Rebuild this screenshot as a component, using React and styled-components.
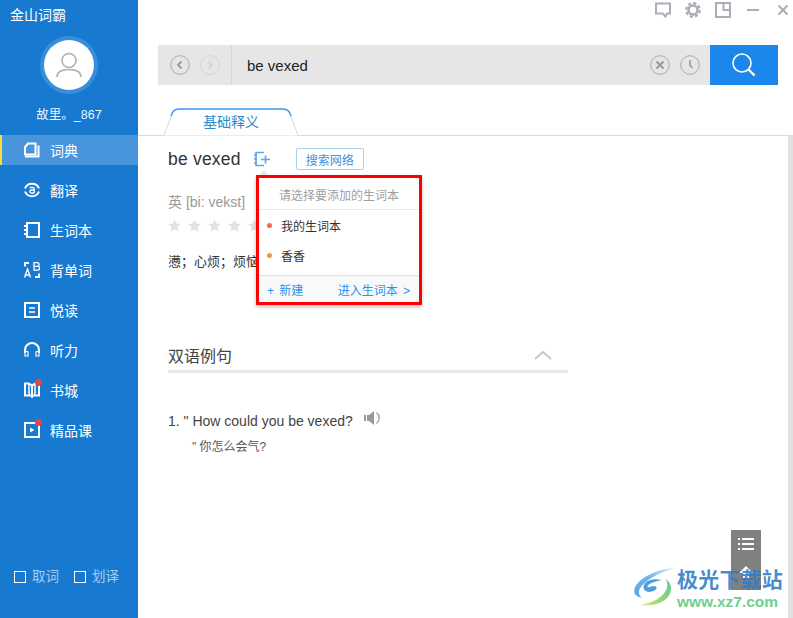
import styled, { createGlobalStyle } from "styled-components";

const GlobalStyle = createGlobalStyle`
  html, body {
    margin: 0;
    padding: 0;
    background: #fff;
  }
  body {
    font-family: "Liberation Sans", "Noto Sans CJK SC", sans-serif;
  }
  * {
    box-sizing: border-box;
  }
`;

const Window = styled.div`
  position: relative;
  display: flex;
  width: 793px;
  height: 618px;
  overflow: hidden;
`;

// Sidebar
const Sidebar = styled.aside`
  display: flex;
  flex-direction: column;
  width: 138px;
  flex-shrink: 0;
  background: #1879d0;
  color: #fff;
`;
const AppTitle = styled.div`
  height: 36px;
  padding: 6px 0 0 10px;
  font-size: 14px;
  line-height: 18px;
`;
const Avatar = styled.div`
  display: flex;
  align-items: center;
  justify-content: center;
  align-self: center;
  width: 50px;
  height: 50px;
  border-radius: 50%;
  background: #fff;
  box-shadow: 0 0 0 4px #3a8ddb;
  margin-top: 4px;
`;
const UserName = styled.div`
  height: 18px;
  margin-top: 16px;
  text-align: center;
  font-size: 12.5px;
  line-height: 18px;
  color: #eaf4fc;
`;
const Nav = styled.nav`
  display: flex;
  flex-direction: column;
  gap: 10px;
  margin-top: 11px;
`;
const NavItem = styled.div`
  display: flex;
  align-items: center;
  gap: 10px;
  height: 30px;
  padding-left: ${(p) => (p.$active ? "22px" : "24px")};
  border-left: ${(p) => (p.$active ? "2px solid #f7e03c" : "none")};
  background: ${(p) => (p.$active ? "#4895dc" : "transparent")};
  font-size: 14px;
`;
const NavIcon = styled.span`
  position: relative;
  display: flex;
  width: 16px;
  height: 16px;
`;
const RedDot = styled.i`
  position: absolute;
  top: -3px;
  right: -2px;
  width: 7px;
  height: 7px;
  border-radius: 50%;
  background: #e64545;
`;
const SidebarFooter = styled.div`
  display: flex;
  gap: 15px;
  margin-top: auto;
  margin-bottom: 33px;
  padding-left: 14px;
`;
const CheckOption = styled.label`
  display: flex;
  align-items: center;
  gap: 6px;
  font-size: 13.5px;
  line-height: 16px;
  color: #a4cdef;
`;
const CheckBox = styled.span`
  width: 12px;
  height: 12px;
  border: 1px solid #fff;
`;

// Main column
const Main = styled.main`
  position: relative;
  flex: 1;
  display: flex;
  flex-direction: column;
  min-width: 0;
`;
const TitleBar = styled.div`
  display: flex;
  justify-content: flex-end;
  align-items: center;
  gap: 14px;
  height: 20px;
  padding-right: 5px;
`;
const WindowButtons = styled.div`
  display: flex;
  align-items: center;
  gap: 19px;
  margin-left: 2px;
`;
const SearchRow = styled.div`
  display: flex;
  height: 40px;
  margin: 25px 15px 0 20px;
  background: #e6e6e6;
`;
const NavArrows = styled.div`
  display: flex;
  align-items: center;
  gap: 10px;
  width: 74px;
  padding-left: 12px;
  border-right: 1px solid #d8d8d8;
`;
const SearchText = styled.div`
  flex: 1;
  padding-left: 15px;
  font-size: 15px;
  line-height: 41px;
  color: #222;
`;
const SearchActions = styled.div`
  display: flex;
  align-items: center;
  gap: 10px;
  padding-right: 10px;
`;
const SearchButton = styled.div`
  display: flex;
  align-items: center;
  justify-content: center;
  width: 68px;
  background: #1c87ea;
`;
const TabBar = styled.div`
  display: flex;
  height: 28px;
  margin: 23px 5px 0 0;
  padding-left: 25px;
  border-bottom: 1px solid #d9d9d9;
`;
const TabLabel = styled.div`
  position: relative;
  width: 136px;
  height: 28px;
  text-align: center;
  font-size: 14px;
  line-height: 28px;
  color: #2a8bd0;
`;
const TabShape = styled.svg`
  position: absolute;
  left: 0;
  top: 0;
`;
const TabText = styled.span`
  position: relative;
`;
const Content = styled.section`
  width: 400px;
  margin-left: 30px;
`;
const WordRow = styled.div`
  display: flex;
  align-items: center;
  height: 22px;
  margin-top: 12px;
`;
const Word = styled.h1`
  margin: 0 13px 0 0;
  font-size: 17.5px;
  font-weight: 400;
  color: #333;
  letter-spacing: 0.2px;
`;
const WebSearch = styled.button`
  width: 68px;
  height: 22px;
  margin-left: 26px;
  padding: 0;
  border: 1px solid #a5d2ea;
  border-radius: 2px;
  background: #fff;
  font-family: inherit;
  font-size: 12px;
  color: #3a93dc;
`;
const Phonetic = styled.div`
  margin-top: 23px;
  font-size: 14px;
  line-height: 18px;
  color: #999;
`;
const Stars = styled.div`
  display: flex;
  gap: 7px;
  margin-top: 8px;
`;
const Meaning = styled.div`
  margin-top: 21px;
  font-size: 13px;
  line-height: 18px;
  color: #333;
`;
const SectionHead = styled.div`
  display: flex;
  align-items: center;
  justify-content: space-between;
  height: 38px;
  margin-top: 64px;
  padding: 4px 16px 0 0;
  border-bottom: 3px solid #e6e9ec;
  font-size: 16px;
  color: #444;
`;
const ExampleLine = styled.div`
  display: flex;
  align-items: center;
  gap: 11px;
  margin-top: 38px;
  font-size: 14px;
  line-height: 20px;
  color: #444;
`;
const SpeakerIcon = styled.svg`
  margin-bottom: 6px;
`;
const ExampleCn = styled.div`
  margin: 7px 0 0 24px;
  font-size: 12px;
  line-height: 18px;
  color: #555;
`;
const ScrollTrack = styled.div`
  position: absolute;
  top: 135px;
  right: 0;
  bottom: 0;
  width: 5px;
  background: #e0e0e0;
`;

// Notebook picker
const Picker = styled.div`
  position: absolute;
  left: 118px;
  top: 175px;
  width: 166px;
  height: 130px;
  border: 3px solid #f00;
  background: #fff;
  box-shadow: 0 2px 4px rgba(0, 0, 0, 0.25);
`;
const PickerNotch = styled.i`
  position: absolute;
  left: 1px;
  top: -8px;
  border: 4px solid transparent;
  border-top: 0;
  border-bottom: 5px solid #e4e4e4;
`;
const PickerTitle = styled.div`
  height: 32px;
  padding-left: 20px;
  border-bottom: 1px solid #e8e8e8;
  font-size: 12px;
  line-height: 36px;
  color: #a0a0a0;
`;
const PickerList = styled.div`
  height: 65px;
`;
const PickerItem = styled.div`
  display: flex;
  align-items: center;
  gap: 9px;
  height: 30px;
  padding-left: 8px;
  font-size: 12px;
  color: #333;
`;
const ItemDot = styled.i`
  width: 5px;
  height: 5px;
  border-radius: 50%;
  background: ${(p) => p.$color};
`;
const PickerFooter = styled.div`
  display: flex;
  justify-content: space-between;
  height: 27px;
  padding: 0 9px 0 8px;
  border-top: 1px solid #e2e2e2;
  background: #f8f9fa;
  font-size: 12px;
  line-height: 30px;
  word-spacing: 2px;
  color: #2b94ea;
`;

// Floating tools and site badge
const FloatTools = styled.div`
  position: absolute;
  left: 593px;
  top: 530px;
  display: flex;
  flex-direction: column;
  align-items: center;
  gap: 16px;
  width: 30px;
  height: 60px;
  padding-top: 8px;
  background: #808080;
`;
const Badge = styled.div`
  position: absolute;
  left: 495px;
  top: 566px;
  display: flex;
`;
const BadgeText = styled.div`
  display: flex;
  flex-direction: column;
  padding-top: 1px;
`;
const BadgeName = styled.div`
  font-size: 21px;
  line-height: 25px;
  font-weight: 700;
  letter-spacing: 0.2px;
  color: rgba(45, 125, 200, 0.88);
`;
const BadgeUrl = styled.div`
  font-size: 15.5px;
  line-height: 20px;
  font-weight: 700;
  color: #6fcf8f;
`;

function Glyph({ size = 16, color = "#fff", width = 2, children, viewBox = "0 0 16 16" }) {
  return (
    <svg width={size} height={size} viewBox={viewBox} fill="none" stroke={color} strokeWidth={width}>
      {children}
    </svg>
  );
}

const navItems = [
  {
    label: "词典",
    active: true,
    icon: (
      <>
        <path d="M4 1.500h7.500v11H1V5z" />
        <path d="M14.500 3.500v11H1" />
      </>
    ),
  },
  {
    label: "翻译",
    icon: (
      <>
        <path d="M1 6.500A7.500 7.500 0 0 1 15 6.500" />
        <path d="M15 9.500A7.500 7.500 0 0 1 1 9.500" />
        <path d="M5.700 5.500h3.300a1.300 1.300 0 0 1 1.300 1.300v4M10.300 8H7.300a1.500 1.500 0 0 0 0 3h3" strokeWidth="1.300" />
      </>
    ),
  },
  {
    label: "生词本",
    icon: (
      <>
        <path d="M3 1h12v14H3z" />
        <path d="M0 4h4M0 8h4M0 12h4" />
      </>
    ),
  },
  {
    label: "背单词",
    icon: (
      <>
        <path d="M5 1H1v3.500M11 15h4v-3.500" />
        <path d="M.5 15.500 3.500 7l3 8.500M1.500 13h4" strokeWidth="1.400" />
        <path d="M10 .7h3.300a1.800 1.800 0 0 1 0 3.600H10zM10 4.300h3.800a1.900 1.900 0 0 1 0 3.800H10z" strokeWidth="1.300" />
      </>
    ),
  },
  {
    label: "悦读",
    icon: (
      <>
        <path d="M1 1h14v14H1z" />
        <path d="M5 6h6M5 10h6" strokeWidth="1.500" />
      </>
    ),
  },
  {
    label: "听力",
    icon: (
      <>
        <path d="M1 11V8a7 7 0 0 1 14 0v3" />
        <path d="M1 9v5h3v-4zM15 9v5h-3v-4z" strokeWidth="1.200" />
      </>
    ),
  },
  {
    label: "书城",
    dot: true,
    icon: (
      <>
        <path d="M5 1.500H1V13.500h14V1.500h-4" />
        <path d="M5 1.500 8 3.500l3-2M8 3.500V16" />
        <path d="M5 1.500v12M11 1.500v12" strokeWidth="1.500" />
      </>
    ),
  },
  {
    label: "精品课",
    dot: true,
    icon: (
      <>
        <path d="M1 1h14v14H1z" />
        <path d="M6 5.500v5l4.500-2.500z" fill="#fff" stroke="none" />
      </>
    ),
  },
];

function Star() {
  return (
    <svg width="13" height="13" viewBox="0 0 15 14">
      <path d="m7.500 0 2.200 4.700 5.300.6-3.900 3.500 1 5.200-4.600-2.600L2.900 14l1-5.200L0 5.300l5.300-.6z" fill="#dfe3e8" />
    </svg>
  );
}

function RoundIcon({ color = "#aaa", children }) {
  return (
    <svg width="20" height="20" viewBox="0 0 20 20" fill="none" stroke={color}>
      <circle cx="10" cy="10" r="9.300" />
      {children}
    </svg>
  );
}

function App() {
  return (
    <Window>
      <GlobalStyle />
      <Sidebar>
        <AppTitle>金山词霸</AppTitle>
        <Avatar>
          <Glyph size={26} color="#b0b0b0" width={1.600} viewBox="0 0 26 26">
            <circle cx="13" cy="8.500" r="7" />
            <path d="M1 25c0-5 5-7.500 12-7.500S25 20 25 25" />
          </Glyph>
        </Avatar>
        <UserName>故里。_867</UserName>
        <Nav>
          {navItems.map((item) => (
            <NavItem key={item.label} $active={item.active}>
              <NavIcon>
                <Glyph>{item.icon}</Glyph>
                {item.dot && <RedDot />}
              </NavIcon>
              {item.label}
            </NavItem>
          ))}
        </Nav>
        <SidebarFooter>
          <CheckOption>
            <CheckBox />
            取词
          </CheckOption>
          <CheckOption>
            <CheckBox />
            划译
          </CheckOption>
        </SidebarFooter>
      </Sidebar>

      <Main>
        <TitleBar>
          <Glyph size={16} color="#adadb5" viewBox="0 0 16 16">
            <path d="M1 1.500h14v10h-3l-1.500 3-3-3H1z" />
          </Glyph>
          <Glyph size={16} color="#adadb5" viewBox="0 0 16 16">
            <circle cx="8" cy="8" r="4.500" strokeWidth="2.600" />
            <circle cx="8" cy="8" r="6.800" strokeWidth="2.200" strokeDasharray="3.300 2.040" />
          </Glyph>
          <Glyph size={16} color="#adadb5" viewBox="0 0 16 16">
            <path d="M1 1h14v14H1zM8.500 1v7H15" />
          </Glyph>
          <WindowButtons>
            <Glyph size={12} color="#adadb5" viewBox="0 0 12 12">
              <path d="M0 6h12" />
            </Glyph>
            <Glyph size={10} color="#adadb5" viewBox="0 0 10 10">
              <path d="m.5.5 9 9M9.500.5l-9 9" />
            </Glyph>
          </WindowButtons>
        </TitleBar>

        <SearchRow>
          <NavArrows>
            <RoundIcon>
              <path d="M11.500 6.500 8 10l3.500 3.500" stroke="#999" strokeWidth="1.800" />
            </RoundIcon>
            <RoundIcon color="#d4d4d4">
              <path d="M8.500 6.500 12 10l-3.500 3.500" stroke="#d4d4d4" strokeWidth="1.800" />
            </RoundIcon>
          </NavArrows>
          <SearchText>be vexed</SearchText>
          <SearchActions>
            <RoundIcon>
              <path d="m6.500 6.500 7 7M13.500 6.500l-7 7" stroke="#999" strokeWidth="2" />
            </RoundIcon>
            <RoundIcon>
              <path d="M10 5v5.500l2.500 2.500" stroke="#999" strokeWidth="1.600" />
            </RoundIcon>
          </SearchActions>
          <SearchButton>
            <svg width="24" height="24" viewBox="0 0 24 24" fill="none" stroke="#fff">
              <circle cx="10" cy="10" r="9" strokeWidth="1.600" />
              <path d="m16.500 16.500 6 6" strokeWidth="2.400" />
            </svg>
          </SearchButton>
        </SearchRow>

        <TabBar>
          <TabLabel>
            <TabShape width="136" height="28" viewBox="0 0 136 28" fill="#fff">
              <path d="M1 27.500 9 6Q11 1 17 1h102q6 0 8 5l8 21.500" stroke="#d9d9d9" />
              <path d="M8 8 9.500 4.500Q11 1 17 1h102q6 0 7.500 3.500L128 8" fill="none" stroke="#3e9bf2" strokeWidth="1.500" />
            </TabShape>
            <TabText>基础释义</TabText>
          </TabLabel>
        </TabBar>

        <Content>
          <WordRow>
            <Word>be vexed</Word>
            <Glyph size={16} color="#5ba7ef" width={1.700} viewBox="0 0 16 16">
              <path d="M10 1.500H2v13h8M0 4h3M0 8h3M0 12h3M7 8.500h9M11.500 4.500v8" />
            </Glyph>
            <WebSearch>搜索网络</WebSearch>
          </WordRow>
          <Phonetic>英 [bi: vekst]</Phonetic>
          <Stars>
            <Star />
            <Star />
            <Star />
            <Star />
            <Star />
          </Stars>
          <Meaning>懑；心烦；烦恼</Meaning>
          <SectionHead>
            双语例句
            <svg width="18" height="10" viewBox="0 0 18 10" fill="none" stroke="#c3c8ce" strokeWidth="2">
              <path d="m1 9 8-7 8 7" />
            </svg>
          </SectionHead>
          <ExampleLine>
            1. " How could you be vexed?
            <SpeakerIcon width="18" height="14" viewBox="0 0 18 14">
              <path d="M0 4h2v6H0zM3 4h2l5-4v14l-5-4H3z" fill="#9a9a9a" />
              <path d="M12.500 1.500a7 7 0 0 1 0 11" fill="none" stroke="#9a9a9a" strokeWidth="1.300" />
            </SpeakerIcon>
          </ExampleLine>
          <ExampleCn>" 你怎么会气?</ExampleCn>
        </Content>

        <Picker>
          <PickerNotch />
          <PickerTitle>请选择要添加的生词本</PickerTitle>
          <PickerList>
            <PickerItem>
              <ItemDot $color="#f4694a" />
              我的生词本
            </PickerItem>
            <PickerItem>
              <ItemDot $color="#f79a27" />
              香香
            </PickerItem>
          </PickerList>
          <PickerFooter>
            <span>+ 新建</span>
            <span>进入生词本 &gt;</span>
          </PickerFooter>
        </Picker>

        <ScrollTrack />

        <FloatTools>
          <svg width="16" height="12" viewBox="0 0 16 12" stroke="#fff" strokeWidth="2">
            <path d="M0 1h2M4 1h12M0 6h2M4 6h12M0 11h2M4 11h12" />
          </svg>
          <svg width="14" height="12" viewBox="0 0 14 12" fill="#fff">
            <path d="M7 0 14 7H10V12H4V7H0z" />
          </svg>
        </FloatTools>

        <Badge>
          <svg width="44" height="42" viewBox="0 0 46 44" fill="none">
            <defs>
              <linearGradient id="sweepBlue" x1="1" y1="0" x2="0" y2="1">
                <stop offset="0" stopColor="#d5e9f7" />
                <stop offset="0.5" stopColor="#6fb5ea" />
                <stop offset="1" stopColor="#5aa4e0" />
              </linearGradient>
              <linearGradient id="sweepGreen" x1="1" y1="0" x2="0" y2="1">
                <stop offset="0" stopColor="#5cc79a" />
                <stop offset="0.6" stopColor="#96d96c" />
                <stop offset="1" stopColor="#f3ea8a" />
              </linearGradient>
            </defs>
            <path d="M44 2C28 3 12 9 4 19c-5 7-3 13 5 14-4-3-4-8 1-13C17 12 30 6 44 2z" fill="url(#sweepBlue)" />
            <path d="M30 15c-8-3-17 0-19 6-1 5 5 8 11 5 4-2 3-5 0-5-3 0-5 2-7 1 0-3 8-6 15-7z" fill="#4f9ddc" />
            <path d="M34 14c5 7 0 16-9 21-6 3-13 5-18 6 10 1 23 0 30-9 5-7 3-15-3-18z" fill="url(#sweepGreen)" />
          </svg>
          <BadgeText>
            <BadgeName>极光下载站</BadgeName>
            <BadgeUrl>www.xz7.com</BadgeUrl>
          </BadgeText>
        </Badge>
      </Main>
    </Window>
  );
}

export default App;
